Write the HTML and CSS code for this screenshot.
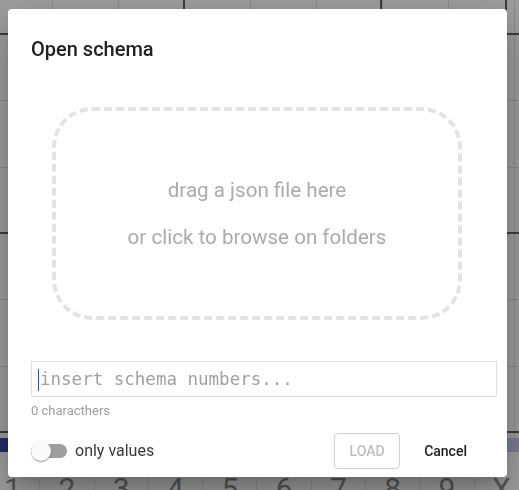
FILE: index.html
```html
<!DOCTYPE html>
<html lang="en">
<head>
<meta charset="utf-8">
<title>Open schema</title>
<link rel="stylesheet" href="styles.css">
</head>
<body>
<div class="board">
  <div class="grid"></div>
  <div class="bar"><span class="bar-sel"></span></div>
  <div class="digits">
    <span class="digit">1</span><span class="digit">2</span><span class="digit">3</span><span class="digit">4</span><span class="digit">5</span><span class="digit">6</span><span class="digit">7</span><span class="digit">8</span><span class="digit">9</span><span class="digit">X</span>
  </div>
</div>
<div class="overlay">
  <div class="dialog">
    <h2 class="title">Open schema</h2>
    <div class="dropzone">
      <p class="drop-line">drag a json file here</p>
      <p class="drop-line">or click to browse on folders</p>
    </div>
    <div class="field">
      <input class="schema-input" type="text" placeholder="insert schema numbers...">
    </div>
    <div class="counter">0 characthers</div>
    <div class="actions">
      <label class="toggle">
        <span class="track"><span class="thumb"></span></span>
        <span class="toggle-label">only values</span>
      </label>
      <div class="buttons">
        <button class="btn btn-load" disabled>LOAD</button>
        <button class="btn btn-cancel">Cancel</button>
      </div>
    </div>
  </div>
</div>
</body>
</html>
```

FILE: styles.css
```css
html, body {
  margin: 0;
  padding: 0;
  width: 519px;
  height: 490px;
  overflow: hidden;
  font-family: Roboto, "Liberation Sans", sans-serif;
  background: #fff;
}

.board {
  display: flex;
  flex-direction: column;
  width: 519px;
  height: 490px;
  overflow: hidden;
}

.grid {
  flex: 0 0 438px;
  background-color: #fff;
  background-image:
    repeating-linear-gradient(to bottom, #626262 0 2px, transparent 2px 199px),
    repeating-linear-gradient(to right, #626262 0 2px, transparent 2px 197px),
    repeating-linear-gradient(to bottom, #e0e0e0 0 1px, transparent 1px 66.33px),
    repeating-linear-gradient(to right, #e0e0e0 0 1px, transparent 1px 66px);
  background-position: 0 33px, -14px 0, 0 34px, 52px 0;
}

.bar {
  flex: 0 0 14px;
  display: flex;
  background: #c6caf0;
}

.bar-sel {
  width: 8px;
  background: #3a47b0;
}

.digits {
  flex: 0 0 52px;
  display: flex;
  margin-left: -14px;
  padding-top: 22px;
  box-sizing: border-box;
}

.digit {
  flex: 0 0 54.3px;
  text-align: center;
  font-size: 30px;
  line-height: 30px;
  color: #8e8e8e;
  border-right: 1px solid #e6e6e6;
  box-sizing: border-box;
}

.overlay {
  position: fixed;
  inset: 0;
  background: rgba(0, 0, 0, 0.38);
  display: flex;
  align-items: flex-start;
  padding: 9px 0 0 8px;
}

.dialog {
  width: 499px;
  height: 468px;
  box-sizing: border-box;
  background: #fff;
  border-radius: 4px;
  padding: 24px 10px 0 23px;
  display: flex;
  flex-direction: column;
  box-shadow: 0 11px 15px -7px rgba(0,0,0,.2), 0 24px 38px 3px rgba(0,0,0,.14), 0 9px 46px 8px rgba(0,0,0,.12);
}

.title {
  margin: 0;
  font-size: 20px;
  line-height: 32px;
  font-weight: 500;
  color: #212121;
}

.dropzone {
  margin: 42px 0 0 21px;
  width: 410px;
  height: 213px;
  box-sizing: border-box;
  border: 4px dashed #e3e3e3;
  border-radius: 40px;
  display: flex;
  flex-direction: column;
  align-items: center;
  justify-content: center;
  gap: 23px;
}

.drop-line {
  margin: 0;
  font-size: 20.6px;
  line-height: 24px;
  color: #ababab;
}

.field {
  position: relative;
  margin-top: 41px;
  width: 466px;
}

.field::before {
  content: "";
  position: absolute;
  left: 7px;
  top: 8px;
  width: 1px;
  height: 22px;
  background: #3f51b5;
}

.schema-input {
  display: block;
  width: 100%;
  height: 36px;
  box-sizing: border-box;
  border: 1px solid #e0e0e0;
  padding: 0 8px;
  font-family: "DejaVu Sans Mono", "Liberation Mono", monospace;
  font-size: 17.5px;
  color: #333;
  outline: none;
  background: #fff;
}

.schema-input::placeholder {
  color: #a0a0a0;
}

.counter {
  margin-top: 6px;
  font-size: 13px;
  line-height: 16px;
  color: #9e9e9e;
}

.actions {
  margin-top: 14px;
  margin-right: 14px;
  display: flex;
  align-items: center;
  justify-content: space-between;
  height: 36px;
}

.toggle {
  display: flex;
  align-items: center;
  gap: 8px;
}

.track {
  position: relative;
  display: block;
  width: 36px;
  height: 14px;
  border-radius: 7px;
  background: #9e9e9e;
}

.thumb {
  position: absolute;
  left: 0;
  top: -3px;
  width: 20px;
  height: 20px;
  border-radius: 50%;
  background: #fafafa;
  box-shadow: 0 2px 1px -1px rgba(0,0,0,.2), 0 1px 1px 0 rgba(0,0,0,.14), 0 1px 3px 0 rgba(0,0,0,.12);
}

.toggle-label {
  font-size: 16px;
  line-height: 20px;
  color: #3a3a3a;
}

.buttons {
  display: flex;
  align-items: center;
  gap: 8px;
}

.btn {
  font-family: Roboto, "Liberation Sans", sans-serif;
  font-size: 14px;
  font-weight: 500;
  height: 36px;
  border-radius: 4px;
  background: #fff;
  cursor: pointer;
}

.btn-load {
  width: 66px;
  border: 1px solid #d0d0d0;
  color: #bdbdbd;
  padding: 0;
}

.btn-cancel {
  border: none;
  padding: 0 16px;
  color: #212121;
}
```
